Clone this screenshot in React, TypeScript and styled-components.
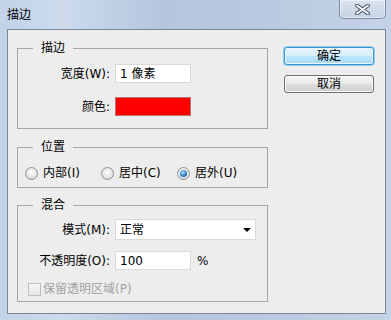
import React from "react";
import styled, { createGlobalStyle, css } from "styled-components";

const GlobalStyle = createGlobalStyle`
  html, body {
    margin: 0;
    padding: 0;
    background: #ffffff;
  }

  body {
    font-family: "DejaVu Sans", "Noto Sans CJK SC", sans-serif;
    font-size: 12px;
    color: #000000;
  }
`;

const Window = styled.div`
  width: 391px;
  height: 320px;
  display: flex;
  flex-direction: column;
  box-sizing: border-box;
  background: linear-gradient(
    90deg,
    #c2d2e7 0%,
    #ccdaec 16%,
    #b4c5dd 42%,
    #bac9df 68%,
    #c5d3e7 100%
  );
`;

const TitleBar = styled.div`
  height: 29px;
  display: flex;
  align-items: flex-start;
  flex-shrink: 0;
`;

const Title = styled.div`
  padding: 7px 0 0 7px;
  line-height: 16px;
`;

const CloseButton = styled.div`
  margin-left: auto;
  margin-right: 5px;
  width: 47px;
  height: 19px;
  box-sizing: border-box;
  border: 1px solid #7c8ba1;
  border-top: none;
  border-radius: 0 0 5px 5px;
  background: linear-gradient(#dae3ef, #c6d3e4);
  box-shadow: inset 0 0 0 1px rgba(255, 255, 255, 0.5);
  display: flex;
  align-items: center;
  justify-content: center;
`;

const Client = styled.div`
  flex: 1;
  margin: 0 5px 6px 7px;
  border: 1px solid #7b8799;
  background: #ededed;
  display: flex;
  box-sizing: border-box;
`;

const Groups = styled.div`
  width: 251px;
  margin-left: 9px;
  padding-top: 10px;
  display: flex;
  flex-direction: column;
`;

const Group = styled.fieldset<{ $offset?: number }>`
  margin: ${({ $offset = 0 }) => $offset}px 0 0 0;
  padding: 0;
  min-width: 0;
  border: 1px solid #a6a6a6;
`;

const Legend = styled.legend`
  margin-left: 15px;
  padding: 0 8px;
  line-height: 16px;
`;

const GroupBody = styled.div<{ $top: number; $bottom: number; $gap?: number }>`
  display: flex;
  flex-direction: column;
  padding: ${({ $top, $bottom }) => `${$top}px 0 ${$bottom}px 0`};
  gap: ${({ $gap = 0 }) => $gap}px;
`;

const Row = styled.div<{ $offset?: number }>`
  display: flex;
  align-items: center;
  gap: 5px;
  margin-top: ${({ $offset = 0 }) => $offset}px;
`;

const Label = styled.div`
  width: 92px;
  flex-shrink: 0;
  text-align: right;
  line-height: 16px;
  white-space: nowrap;
`;

const Field = styled.div<{ $width?: number; $height?: number }>`
  width: ${({ $width = 76 }) => $width}px;
  height: ${({ $height = 19 }) => $height}px;
  box-sizing: border-box;
  background: #ffffff;
  border: 1px solid #dadada;
  padding: 0 4px;
  display: flex;
  align-items: center;
  justify-content: space-between;
  line-height: 16px;
`;

const Swatch = styled.div`
  width: 76px;
  height: 19px;
  box-sizing: border-box;
  background: #ff0000;
  border: 1px solid #b97373;
`;

const Arrow = styled.span`
  width: 0;
  height: 0;
  border-left: 4px solid transparent;
  border-right: 4px solid transparent;
  border-top: 4px solid #000000;
`;

const Unit = styled.span`
  margin-left: 1px;
  line-height: 16px;
`;

const RadioRow = styled.div`
  display: flex;
  padding-left: 7px;
`;

const RadioItem = styled.div`
  width: 76px;
  display: flex;
  align-items: center;
  gap: 5px;
  line-height: 16px;
`;

const RadioCircle = styled.span<{ $checked?: boolean }>`
  width: 13px;
  height: 13px;
  box-sizing: border-box;
  border-radius: 50%;
  border: 1px solid #919191;
  background: radial-gradient(circle at 50% 40%, #ffffff 0%, #e2e2e2 60%, #c9c9c9 100%);
  display: flex;
  align-items: center;
  justify-content: center;

  ${({ $checked }) =>
    $checked &&
    css`
      &::after {
        content: "";
        width: 7px;
        height: 7px;
        border-radius: 50%;
        background: radial-gradient(circle at 40% 35%, #b6e4ff 0%, #2f7cc2 55%, #1a4c80 100%);
      }
    `}
`;

const CheckRow = styled.div<{ $offset?: number }>`
  display: flex;
  align-items: center;
  gap: 2px;
  padding-left: 10px;
  margin-top: ${({ $offset = 0 }) => $offset}px;
  height: 14px;
  color: #a3a3a3;
  line-height: 16px;
`;

const CheckBox = styled.span`
  width: 13px;
  height: 13px;
  box-sizing: border-box;
  border: 1px solid #bebebe;
  background: linear-gradient(#f6f6f6, #e8e8e8);
`;

const Buttons = styled.div`
  margin-left: auto;
  padding: 17px 11px 0 0;
  display: flex;
  flex-direction: column;
  gap: 10px;
`;

const Button = styled.div<{ $primary?: boolean }>`
  width: 90px;
  height: 18px;
  box-sizing: border-box;
  border-radius: 3px;
  display: flex;
  align-items: center;
  justify-content: center;
  line-height: 16px;

  ${({ $primary }) =>
    $primary
      ? css`
          border: 1px solid #3c8fc8;
          background: linear-gradient(#e8f6fd 0%, #d6effc 50%, #bde5fb 50%, #a8daf5 100%);
          box-shadow: 0 0 0 1px #8fd0f2, inset 0 0 0 1px #e6f7ff;
        `
      : css`
          border: 1px solid #707070;
          background: linear-gradient(#f3f3f3 0%, #ebebeb 50%, #dddddd 50%, #cfcfcf 100%);
          box-shadow: inset 0 0 0 1px #fbfbfb;
        `}
`;

const CloseIcon = () => (
  <svg width="17" height="11" viewBox="0 0 17 11">
    <path d="M3 1.5 L14 9.5 M14 1.5 L3 9.5" stroke="#4a5566" strokeWidth="4" strokeLinecap="round" />
    <path d="M3 1.5 L14 9.5 M14 1.5 L3 9.5" stroke="#f4f6f9" strokeWidth="2" strokeLinecap="round" />
  </svg>
);

const positions = [
  { label: "内部(I)", checked: false },
  { label: "居中(C)", checked: false },
  { label: "居外(U)", checked: true },
];

export default function App() {
  return (
    <>
      <GlobalStyle />
      <Window>
        <TitleBar>
          <Title>描边</Title>
          <CloseButton>
            <CloseIcon />
          </CloseButton>
        </TitleBar>

        <Client>
          <Groups>
            <Group>
              <Legend>描边</Legend>
              <GroupBody $top={8} $bottom={12} $gap={14}>
                <Row>
                  <Label>宽度(W):</Label>
                  <Field>1 像素</Field>
                </Row>
                <Row>
                  <Label>颜色:</Label>
                  <Swatch />
                </Row>
              </GroupBody>
            </Group>

            <Group $offset={10}>
              <Legend>位置</Legend>
              <GroupBody $top={10} $bottom={6}>
                <RadioRow>
                  {positions.map((p) => (
                    <RadioItem key={p.label}>
                      <RadioCircle $checked={p.checked} />
                      {p.label}
                    </RadioItem>
                  ))}
                </RadioRow>
              </GroupBody>
            </Group>

            <Group $offset={9}>
              <Legend>混合</Legend>
              <GroupBody $top={6} $bottom={5}>
                <Row>
                  <Label>模式(M):</Label>
                  <Field $width={141} $height={21}>
                    正常
                    <Arrow />
                  </Field>
                </Row>
                <Row $offset={11}>
                  <Label>不透明度(O):</Label>
                  <Field>100</Field>
                  <Unit>%</Unit>
                </Row>
                <CheckRow $offset={12}>
                  <CheckBox />
                  保留透明区域(P)
                </CheckRow>
              </GroupBody>
            </Group>
          </Groups>

          <Buttons>
            <Button $primary>确定</Button>
            <Button>取消</Button>
          </Buttons>
        </Client>
      </Window>
    </>
  );
}
